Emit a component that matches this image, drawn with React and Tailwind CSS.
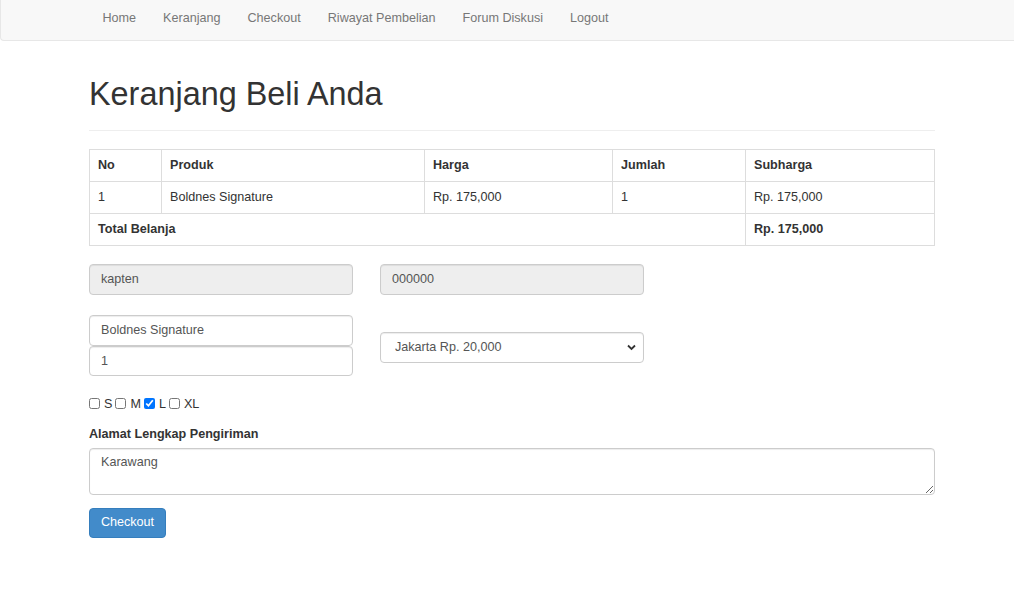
import React from "react";

const navItems = ["Home", "Keranjang", "Checkout", "Riwayat Pembelian", "Forum Diskusi", "Logout"];

const cell = "border border-[#ddd] px-[8px] py-[7px] leading-[17px] text-left align-top";

export default function App() {
  return (
    <div className="min-h-[611px] bg-white font-['Liberation_Sans',Arial,Helvetica,sans-serif] text-[12.6px] text-[#333]">
      {/* Navbar */}
      <div className="h-[41px] bg-[#f8f8f8] border-l border-b border-[#e7e7e7] rounded-bl-[4px]">
        <ul className="flex pl-[88px] pt-[8.5px]">
          {navItems.map((n) => (
            <li key={n} className="px-[13.5px] leading-[18px] text-[#777]">
              {n}
            </li>
          ))}
        </ul>
      </div>

      <div className="ml-[89px] w-[846px]">
        {/* Header */}
        <div className="mt-[36px] pb-[17px] border-b border-[#eee]">
          <h1 className="text-[32.4px] leading-[35.6px] font-normal">Keranjang Beli Anda</h1>
        </div>

        {/* Table */}
        <table className="mt-[18px] w-[845px] table-fixed border-collapse">
          <colgroup>
            <col className="w-[72px]" />
            <col className="w-[263px]" />
            <col className="w-[188px]" />
            <col className="w-[133px]" />
            <col className="w-[189px]" />
          </colgroup>
          <thead>
            <tr>
              <th className={cell + " font-bold"}>No</th>
              <th className={cell + " font-bold"}>Produk</th>
              <th className={cell + " font-bold"}>Harga</th>
              <th className={cell + " font-bold"}>Jumlah</th>
              <th className={cell + " font-bold"}>Subharga</th>
            </tr>
          </thead>
          <tbody>
            <tr>
              <td className={cell}>1</td>
              <td className={cell}>Boldnes Signature</td>
              <td className={cell}>Rp. 175,000</td>
              <td className={cell}>1</td>
              <td className={cell}>Rp. 175,000</td>
            </tr>
            <tr>
              <th colSpan={4} className={cell + " font-bold"}>Total Belanja</th>
              <th className={cell + " font-bold"}>Rp. 175,000</th>
            </tr>
          </tbody>
        </table>

        {/* Row 1 readonly inputs */}
        <div className="mt-[18px] flex gap-[27px]">
          <input
            readOnly
            defaultValue="kapten"
            className="w-[264px] h-[31px] px-[11px] bg-[#eee] border border-[#ccc] rounded-[4px] text-[#555] text-[12.6px] shadow-[inset_0_1px_1px_rgba(0,0,0,0.075)] outline-none"
          />
          <input
            readOnly
            defaultValue="000000"
            className="w-[264px] h-[31px] px-[11px] bg-[#eee] border border-[#ccc] rounded-[4px] text-[#555] text-[12.6px] shadow-[inset_0_1px_1px_rgba(0,0,0,0.075)] outline-none"
          />
        </div>

        {/* Row 2 */}
        <div className="mt-[20px] flex gap-[27px] items-start">
          <div className="flex flex-col w-[264px]">
            <input
              readOnly
              defaultValue="Boldnes Signature"
              className="w-[264px] h-[31px] px-[11px] bg-white border border-[#ccc] rounded-[4px] text-[#555] text-[12.6px] shadow-[inset_0_1px_1px_rgba(0,0,0,0.075)] outline-none"
            />
            <input
              readOnly
              defaultValue="1"
              className="w-[264px] h-[30px] px-[11px] bg-white border border-[#ccc] rounded-[4px] text-[#555] text-[12.6px] shadow-[inset_0_1px_1px_rgba(0,0,0,0.075)] outline-none"
            />
          </div>
          <div className="relative mt-[17px] w-[264px] h-[31px]">
            <select
              defaultValue="jkt"
              className="appearance-none w-full h-full pl-[14px] pr-[30px] bg-white border border-[#ccc] rounded-[4px] text-[#555] text-[12.6px] shadow-[inset_0_1px_1px_rgba(0,0,0,0.075)] outline-none"
            >
              <option value="jkt">Jakarta Rp. 20,000</option>
            </select>
            <svg
              className="pointer-events-none absolute right-[8px] top-[12px]"
              width="9"
              height="7"
              viewBox="0 0 9 7"
            >
              <path d="M1 1.5 L4.5 5 L8 1.5" fill="none" stroke="#333" strokeWidth="1.8" />
            </svg>
          </div>
        </div>

        {/* Sizes */}
        <div className="mt-[19px] flex items-center h-[18px] leading-[18px]">
          {[
            ["S", false],
            ["M", false],
            ["L", true],
            ["XL", false],
          ].map(([s, c]) => (
            <label key={s} className="flex items-center">
              <input type="checkbox" defaultChecked={c} className="m-0 w-[11px] h-[11px]" />
              <span className="pl-[4px] pr-[3px]">{s}</span>
            </label>
          ))}
        </div>

        {/* Address */}
        <div className="mt-[12px] font-bold leading-[18px]">Alamat Lengkap Pengiriman</div>
        <textarea
          defaultValue="Karawang"
          className="mt-[5px] block w-[846px] h-[47px] px-[11px] py-[4px] leading-[18px] bg-white border border-[#ccc] rounded-[4px] text-[#555] text-[12.6px] shadow-[inset_0_1px_1px_rgba(0,0,0,0.075)] outline-none"
        />

        <button className="mt-[13px] w-[77px] h-[30px] bg-[#428bca] border border-[#357ebd] rounded-[4px] text-white text-[12.6px] leading-[18px] pb-[1px]">
          Checkout
        </button>
      </div>
    </div>
  );
}
